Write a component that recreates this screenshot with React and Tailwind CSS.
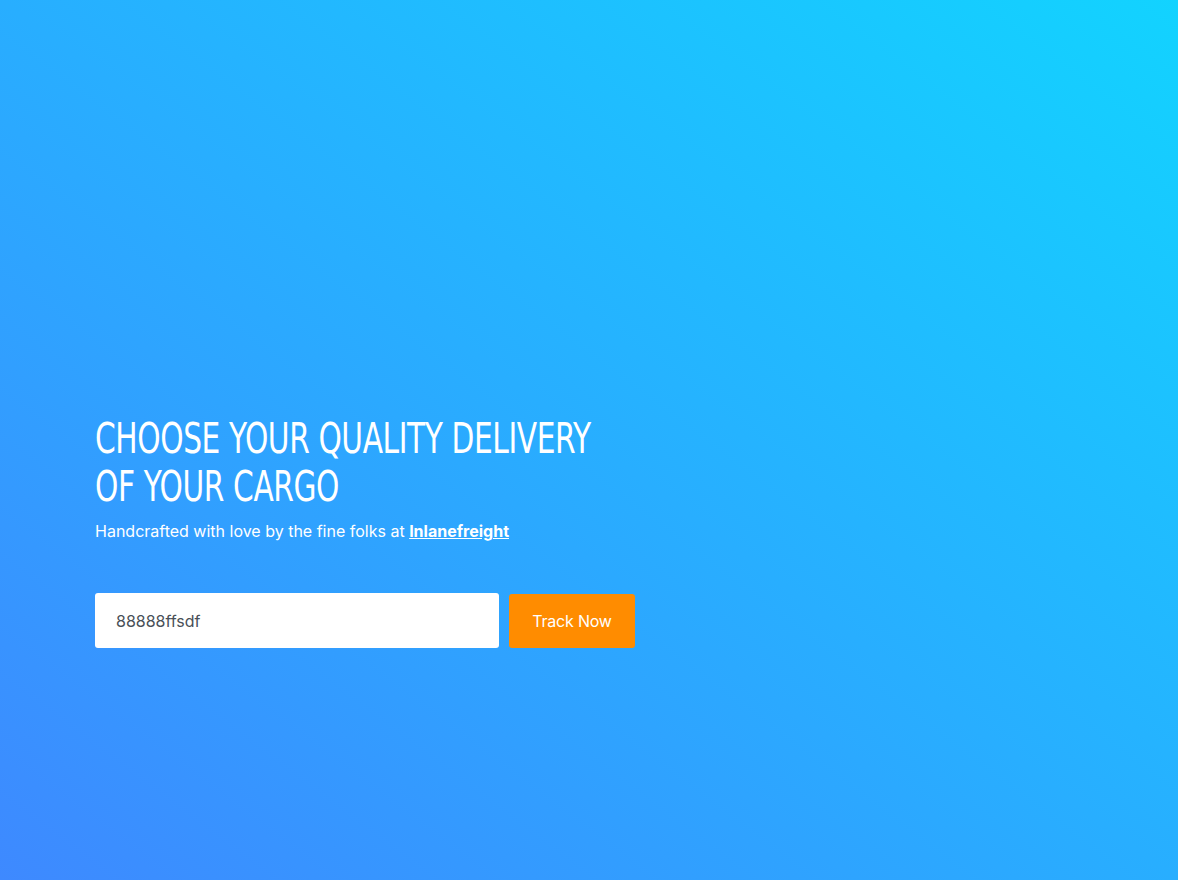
import React, { useState } from "react";

export default function App() {
  const [code, setCode] = useState("88888ffsdf");

  return (
    <div className="min-h-screen h-[880px] w-full bg-[linear-gradient(to_right_top,#3e89ff,#12d3ff)] overflow-hidden">
      <div className="pl-[95px] pt-[415px]">
        {/* Hero heading */}
        <h1 className="origin-left scale-x-[0.785] whitespace-nowrap text-white text-[42px] leading-[48px] font-normal uppercase tracking-[-0.5px] font-['DejaVu_Sans_Condensed',sans-serif] [font-stretch:condensed]">
          Choose your quality delivery
          <br />
          of your cargo
        </h1>
        <p className="mt-[8px] text-white text-[16px] leading-[24px] font-['Inter',sans-serif]">
          Handcrafted with love by the fine folks at{" "}
          <a href="#" className="font-bold underline">
            Inlanefreight
          </a>
        </p>

        {/* Tracking form */}
        <form
          className="mt-[50px] flex items-center gap-[10px]"
          onSubmit={(e) => e.preventDefault()}
        >
          <input
            value={code}
            onChange={(e) => setCode(e.target.value)}
            className="w-[404px] h-[55px] bg-white rounded-[3px] px-[21px] text-[16px] text-[#495057] outline-none font-['Inter',sans-serif]"
          />
          <button
            type="submit"
            className="w-[126px] h-[54px] bg-[#ff8c00] rounded-[3px] text-white text-[16px] tracking-[-0.2px] font-['Inter',sans-serif]"
          >
            Track Now
          </button>
        </form>
      </div>
    </div>
  );
}
